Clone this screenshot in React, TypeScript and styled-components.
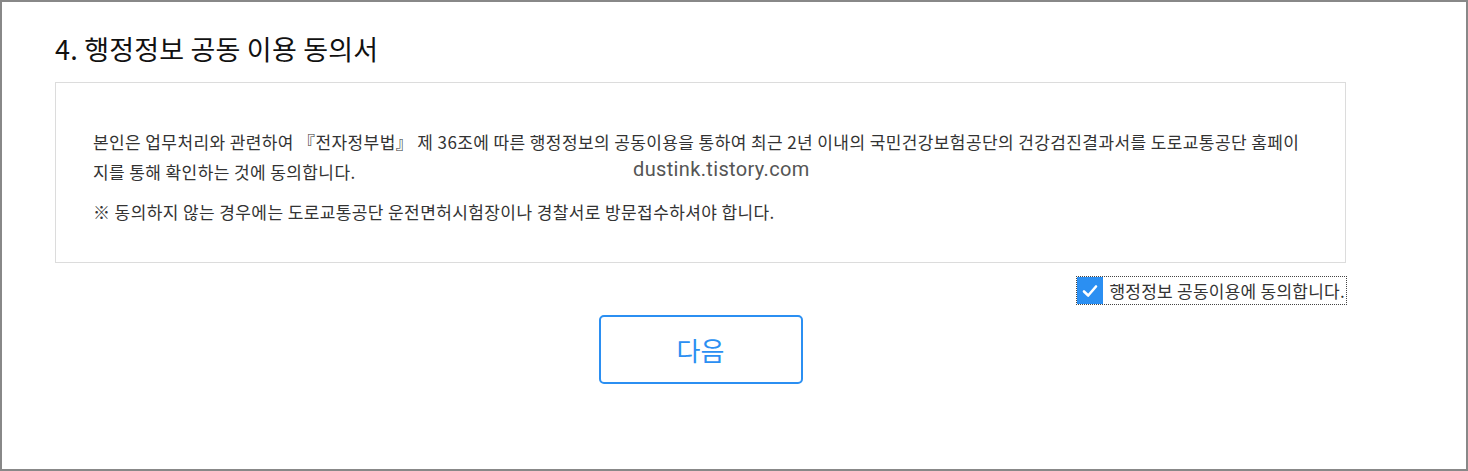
import React, {useState} from 'react'
import styled, {createGlobalStyle} from 'styled-components'

const GlobalStyle = createGlobalStyle`
  html, body {
    margin: 0;
    padding: 0;
    background: #ffffff;
  }
  body {
    font-family: 'Noto Sans CJK KR', 'Noto Sans', sans-serif;
    color: #333333;
  }
`

const Frame = styled.div`
  box-sizing: border-box;
  width: 1468px;
  height: 471px;
  border: 2px solid #888888;
  padding: 25px 120px 0 53px;
`

const Title = styled.h2`
  margin: 0 0 12px;
  height: 43px;
  font-size: 27px;
  font-weight: 400;
  line-height: 43px;
  color: #111111;
  letter-spacing: 0.2px;
`

const AgreeBox = styled.div`
  position: relative;
  box-sizing: border-box;
  height: 181px;
  border: 1px solid #dcdcdc;
  padding: 44px 30px 0 37px;
`

const Paragraph = styled.p<{$gap?: number}>`
  margin: ${({$gap}) => $gap ?? 0}px 0 0;
  font-size: 17px;
  line-height: 30px;
  color: #333333;
  letter-spacing: 0.4px;
  white-space: nowrap;
`

const Watermark = styled.span`
  position: absolute;
  left: 577px;
  top: 74px;
  font-family: Roboto, 'Noto Sans', sans-serif;
  font-size: 20px;
  color: #555555;
  letter-spacing: 0.35px;
`

const CheckRow = styled.div`
  display: flex;
  justify-content: flex-end;
  margin-top: 14px;
`

const CheckLabel = styled.label`
  display: flex;
  align-items: center;
  gap: 6px;
  height: 27px;
  padding-right: 1px;
  outline: 1px dotted #444444;
  font-size: 17px;
  letter-spacing: 0.25px;
  color: #333333;
  cursor: pointer;
`

const CheckMark = styled.span<{$on: boolean}>`
  display: flex;
  align-items: center;
  justify-content: center;
  width: 26px;
  height: 27px;
  background: ${({$on}) => ($on ? '#2b8ff2' : '#ffffff')};
  box-sizing: border-box;
  border: ${({$on}) => ($on ? 'none' : '1px solid #999999')};
`

const ButtonRow = styled.div`
  display: flex;
  justify-content: center;
  margin-top: 11px;
`

const NextButton = styled.button`
  box-sizing: border-box;
  width: 204px;
  height: 69px;
  border: 2px solid #2b8ff2;
  border-radius: 5px;
  background: #ffffff;
  color: #2b8ff2;
  font-family: 'Noto Sans CJK KR', sans-serif;
  font-size: 26px;
  cursor: pointer;
`

export default function App() {
  const [agreed, setAgreed] = useState(true)

  return (
    <>
      <GlobalStyle />
      <Frame>
        <Title>4. 행정정보 공동 이용 동의서</Title>
        <AgreeBox>
          <Paragraph>
            본인은 업무처리와 관련하여 『전자정부법』 제 36조에 따른 행정정보의 공동이용을 통하여 최근 2년 이내의 국민건강보험공단의 건강검진결과서를 도로교통공단 홈페이
            <br />
            지를 통해 확인하는 것에 동의합니다.
          </Paragraph>
          <Paragraph $gap={10}>
            ※ 동의하지 않는 경우에는 도로교통공단 운전면허시험장이나 경찰서로 방문접수하셔야 합니다.
          </Paragraph>
          <Watermark>dustink.tistory.com</Watermark>
        </AgreeBox>
        <CheckRow>
          <CheckLabel onClick={() => setAgreed(!agreed)}>
            <CheckMark $on={agreed}>
              {agreed && (
                <svg width='16' height='14' viewBox='0 0 16 14'>
                  <path
                    d='M2 7.5 L6.2 11.5 L14 2.5'
                    fill='none'
                    stroke='#ffffff'
                    strokeWidth='2.6'
                    strokeLinecap='round'
                    strokeLinejoin='round'
                  />
                </svg>
              )}
            </CheckMark>
            행정정보 공동이용에 동의합니다.
          </CheckLabel>
        </CheckRow>
        <ButtonRow>
          <NextButton>다음</NextButton>
        </ButtonRow>
      </Frame>
    </>
  )
}
